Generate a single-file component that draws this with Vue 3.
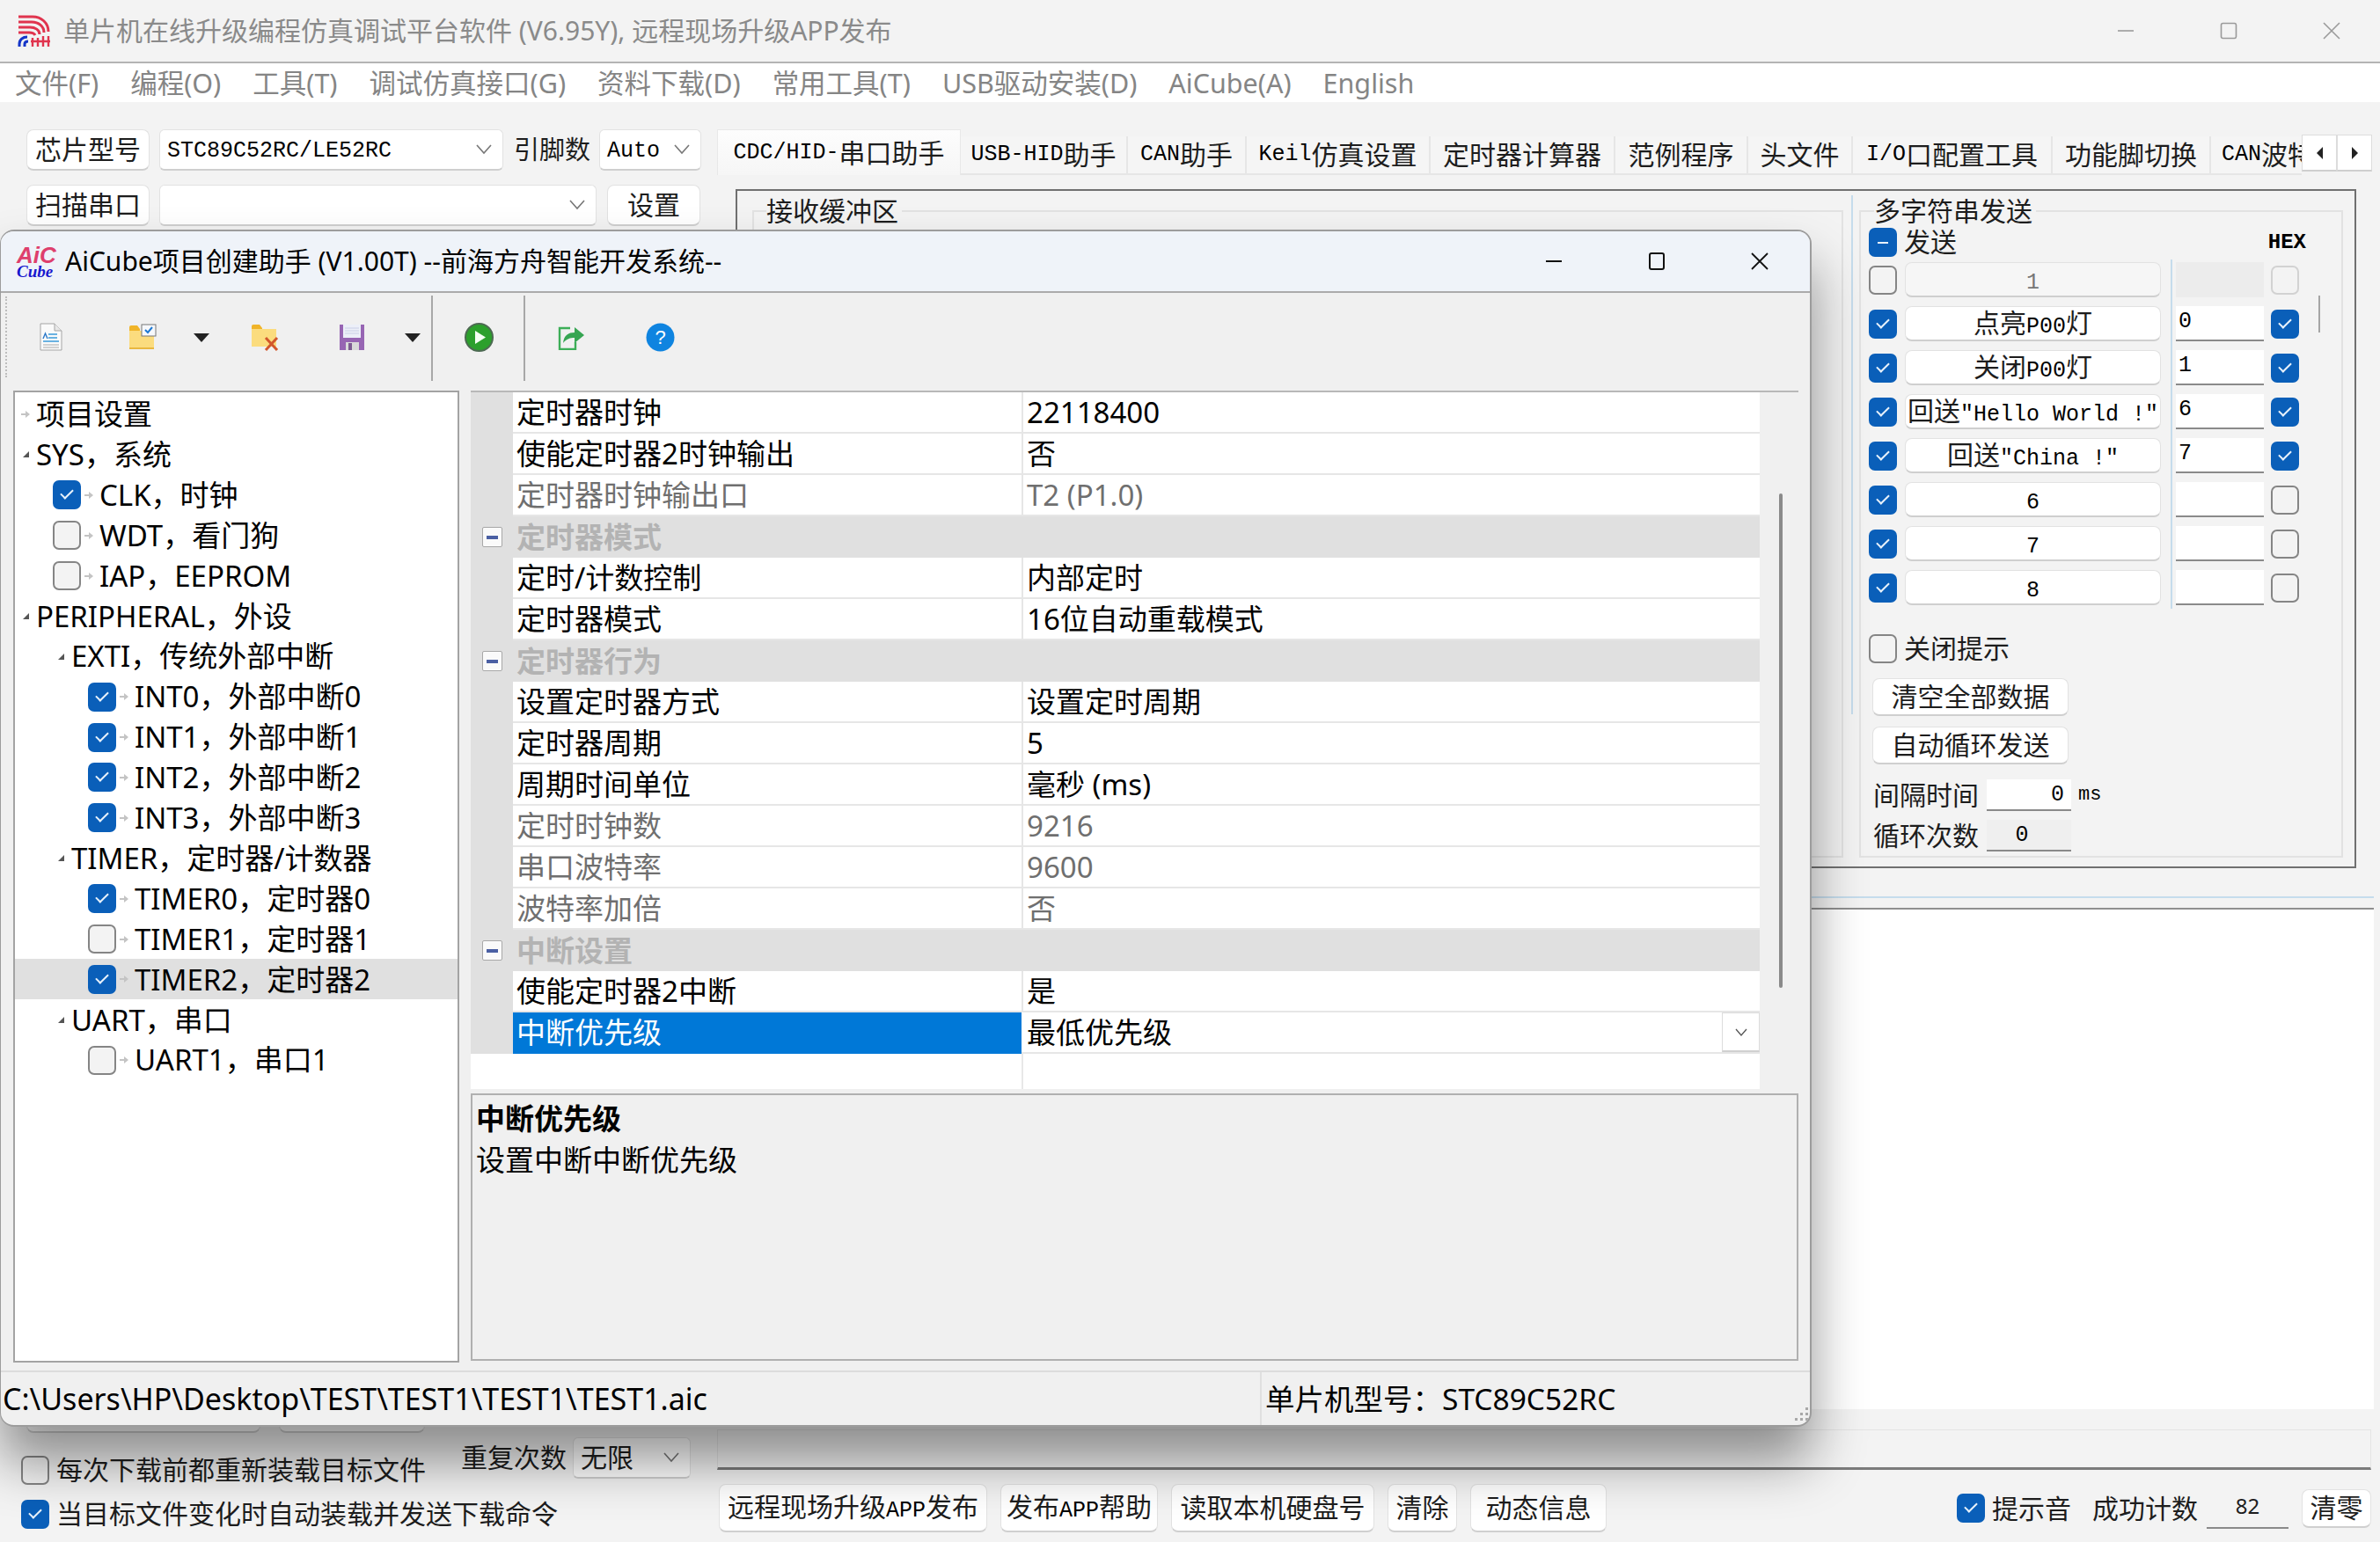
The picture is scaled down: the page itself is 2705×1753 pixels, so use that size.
<script setup>
const menus = ['文件(F)', '编程(O)', '工具(T)', '调试仿真接口(G)', '资料下载(D)', '常用工具(T)', 'USB驱动安装(D)', 'AiCube(A)', 'English'];

const tabs = [
  { label: 'USB-HID助手', width: 190 },
  { label: 'CAN助手', width: 135 },
  { label: 'Keil仿真设置', width: 209 },
  { label: '定时器计算器', width: 210 },
  { label: '范例程序', width: 151 },
  { label: '头文件', width: 119 },
  { label: 'I/O口配置工具', width: 227 },
  { label: '功能脚切换', width: 180 },
  { label: 'CAN波特率', width: 103, clipped: true },
];

const sendRows = [
  { label: '1', value: '', on: false, hex: false, disabled: true },
  { label: '点亮P00灯', value: '0', on: true, hex: true },
  { label: '关闭P00灯', value: '1', on: true, hex: true },
  { label: '回送"Hello World !"', value: '6', on: true, hex: true },
  { label: '回送"China !"', value: '7', on: true, hex: true },
  { label: '6', value: '', on: true, hex: false },
  { label: '7', value: '', on: true, hex: false },
  { label: '8', value: '', on: true, hex: false },
];

const bottomButtons = [
  { label: '远程现场升级APP发布', width: 305 },
  { label: '发布APP帮助', width: 179 },
  { label: '读取本机硬盘号', width: 231 },
  { label: '清除', width: 79 },
  { label: '动态信息', width: 155 },
];

const tree = [
  { label: '项目设置', level: 0, leaf: true },
  { label: 'SYS，系统', level: 0 },
  { label: 'CLK，时钟', level: 1, leaf: true, check: true },
  { label: 'WDT，看门狗', level: 1, leaf: true, check: false },
  { label: 'IAP，EEPROM', level: 1, leaf: true, check: false },
  { label: 'PERIPHERAL，外设', level: 0 },
  { label: 'EXTI，传统外部中断', level: 1 },
  { label: 'INT0，外部中断0', level: 2, leaf: true, check: true },
  { label: 'INT1，外部中断1', level: 2, leaf: true, check: true },
  { label: 'INT2，外部中断2', level: 2, leaf: true, check: true },
  { label: 'INT3，外部中断3', level: 2, leaf: true, check: true },
  { label: 'TIMER，定时器/计数器', level: 1 },
  { label: 'TIMER0，定时器0', level: 2, leaf: true, check: true },
  { label: 'TIMER1，定时器1', level: 2, leaf: true, check: false },
  { label: 'TIMER2，定时器2', level: 2, leaf: true, check: true, selected: true },
  { label: 'UART，串口', level: 1 },
  { label: 'UART1，串口1', level: 2, leaf: true, check: false },
];

const props = [
  { name: '定时器时钟', value: '22118400' },
  { name: '使能定时器2时钟输出', value: '否' },
  { name: '定时器时钟输出口', value: 'T2 (P1.0)', dim: true },
  { category: '定时器模式' },
  { name: '定时/计数控制', value: '内部定时' },
  { name: '定时器模式', value: '16位自动重载模式' },
  { category: '定时器行为' },
  { name: '设置定时器方式', value: '设置定时周期' },
  { name: '定时器周期', value: '5' },
  { name: '周期时间单位', value: '毫秒 (ms)' },
  { name: '定时时钟数', value: '9216', dim: true },
  { name: '串口波特率', value: '9600', dim: true },
  { name: '波特率加倍', value: '否', dim: true },
  { category: '中断设置' },
  { name: '使能定时器2中断', value: '是' },
  { name: '中断优先级', value: '最低优先级', selected: true },
];

/** Odd indexes are the ASCII runs, drawn in the narrow bitmap-like mono face. */
function segs(text) {
  return text.split(/([\x00-\x7f]+)/);
}
</script>

<template>
  <div class="desktop">
    <div class="mainWindow">
      <header class="titleBar">
        <svg class="appLogo" width="38" height="37" viewBox="0 0 38 37" fill="none">
          <g stroke="#e0344e" stroke-width="3">
            <path d="M1 2h16c10 0 18 7 18 17" />
            <path d="M1 8h15c8 0 14 5 14 12" />
            <path d="M1 14h13c6 0 11 3 11 8" />
            <path d="M1 20h12c3 0 6 1 7 3" />
          </g>
          <path d="M2 36v-3c0-5 4-8 9-8" stroke="#1436c8" stroke-width="3" />
          <path d="M8 36v-3c0-2 2-3 4-3" stroke="#1436c8" stroke-width="3" />
          <path d="M17 26v10M23 26v10M29 24v12M35 24v12M15 30h22" stroke="#e0344e" stroke-width="2.4" />
        </svg>
        <span class="titleText">单片机在线升级编程仿真调试平台软件 (V6.95Y), 远程现场升级APP发布</span>
        <div class="winControls mainControls">
          <svg width="20" height="20" viewBox="0 0 20 20"><path d="M1 10h18" stroke="#9a9a9a" stroke-width="1.6" /></svg>
          <svg width="20" height="20" viewBox="0 0 20 20" fill="none"><rect x="1.5" y="1.5" width="17" height="17" rx="2" stroke="#9a9a9a" stroke-width="1.6" /></svg>
          <svg width="20" height="20" viewBox="0 0 20 20"><path d="M1 1l18 18M19 1L1 19" stroke="#9a9a9a" stroke-width="1.6" /></svg>
        </div>
      </header>

      <nav class="menuBar">
        <span v-for="menu in menus" :key="menu">{{ menu }}</span>
      </nav>

      <div class="mainBody">
        <aside class="leftPane">
          <div class="toolRow">
            <button class="btn chipBtn">芯片型号</button>
            <div class="select chipSelect">
              <span class="mono">STC89C52RC/LE52RC</span>
              <svg class="chev" width="18" height="12" viewBox="0 0 18 12" fill="none"><path d="M1 1l8 9 8-9" stroke="#777" stroke-width="1.6" /></svg>
            </div>
            <span class="pinLabel">引脚数</span>
            <div class="select autoSelect">
              <span class="mono">Auto</span>
              <svg class="chev" width="18" height="12" viewBox="0 0 18 12" fill="none"><path d="M1 1l8 9 8-9" stroke="#777" stroke-width="1.6" /></svg>
            </div>
          </div>
          <div class="toolRow">
            <button class="btn chipBtn">扫描串口</button>
            <div class="select portSelect">
              <svg class="chev" width="18" height="12" viewBox="0 0 18 12" fill="none"><path d="M1 1l8 9 8-9" stroke="#777" stroke-width="1.6" /></svg>
            </div>
            <button class="btn setBtn">设置</button>
          </div>

          <div class="leftBottom">
            <div class="stubRow">
              <button class="btn stubA"></button>
              <button class="btn stubB"></button>
            </div>
            <div class="reloadRow">
              <label class="checkLine reloadCheck">
                <span class="cb"></span>
                <span>每次下载前都重新装载目标文件</span>
              </label>
              <span class="repeatLabel">重复次数</span>
              <div class="select repeatSelect">
                <span>无限</span>
                <svg class="chev" width="18" height="12" viewBox="0 0 18 12" fill="none"><path d="M1 1l8 9 8-9" stroke="#777" stroke-width="1.6" /></svg>
              </div>
            </div>
            <label class="checkLine">
              <span class="cb on"></span>
              <span>当目标文件变化时自动装载并发送下载命令</span>
            </label>
          </div>
        </aside>

        <section class="rightPane">
          <div class="tabStrip">
            <div class="tab tabActive">
              <span v-for="(s, i) in segs('CDC/HID-串口助手')" :key="i" :class="{ mono: i % 2 }">{{ s }}</span>
            </div>
            <div
              v-for="tab in tabs"
              :key="tab.label"
              class="tab"
              :class="{ tabClipped: tab.clipped }"
              :style="{ width: tab.width + 'px' }"
            >
              <span v-for="(s, i) in segs(tab.label)" :key="i" :class="{ mono: i % 2 }">{{ s }}</span>
            </div>
            <div class="tabArrows">
              <span class="tabArrow"><i class="triLeft"></i></span>
              <span class="tabArrow"><i class="triRight"></i></span>
            </div>
          </div>

          <div class="tabFrame">
            <fieldset class="group recvGroup">
              <legend>接收缓冲区</legend>
            </fieldset>
            <div class="splitter"></div>
            <fieldset class="group sendGroup">
              <legend>多字符串发送</legend>
              <div class="sendHead">
                <span class="cb mixed"></span>
                <span class="sendHeadText">发送</span>
                <span class="mono hexLabel">HEX</span>
              </div>
              <div class="sendGrid">
                <template v-for="row in sendRows" :key="row.label">
                  <span class="cb" :class="{ on: row.on }"></span>
                  <button class="btn sendBtn" :class="{ disabledBtn: row.disabled }">
                    <span v-for="(s, i) in segs(row.label)" :key="i" :class="{ mono: i % 2 || /^\d$/.test(s) }">{{ s }}</span>
                  </button>
                  <div class="input mono" :class="{ disabledInput: row.disabled }">{{ row.value }}</div>
                  <span class="cb" :class="{ on: row.hex, cbFaint: row.disabled }"></span>
                </template>
              </div>
              <label class="checkLine closeTip">
                <span class="cb"></span>
                <span>关闭提示</span>
              </label>
              <button class="btn wideBtn clearBtn">清空全部数据</button>
              <button class="btn wideBtn loopBtn">自动循环发送</button>
              <div class="fieldRow intervalRow">
                <span>间隔时间</span>
                <div class="input mono intervalInput">0</div>
                <span class="mono msLabel">ms</span>
              </div>
              <div class="fieldRow countRow">
                <span>循环次数</span>
                <div class="input mono countInput">0</div>
              </div>
            </fieldset>
          </div>

          <div class="blueRule"></div>
          <div class="recvArea"></div>
          <div class="sendInput"></div>

          <div class="actionRow">
            <button
              v-for="item in bottomButtons"
              :key="item.label"
              class="btn actionBtn"
              :style="{ width: item.width + 'px' }"
            >
              <span v-for="(s, i) in segs(item.label)" :key="i" :class="{ mono: i % 2 }">{{ s }}</span>
            </button>
            <label class="checkLine soundCheck">
              <span class="cb on"></span>
              <span>提示音</span>
            </label>
            <span class="countLabel">成功计数</span>
            <div class="input countValue">82</div>
            <button class="btn zeroBtn">清零</button>
          </div>
        </section>
      </div>
    </div>

    <div class="dialog">
      <header class="dialogTitle">
        <div class="aicLogo">
          <span class="aicTop">AiC</span>
          <span class="aicBottom">Cube</span>
        </div>
        <span class="dialogTitleText">AiCube项目创建助手 (V1.00T) --前海方舟智能开发系统--</span>
        <div class="winControls dialogControls">
          <svg width="20" height="22" viewBox="0 0 20 22"><path d="M1 11h18" stroke="#111" stroke-width="2" /></svg>
          <svg width="20" height="22" viewBox="0 0 20 22" fill="none"><rect x="2" y="2" width="16" height="18" rx="2" stroke="#111" stroke-width="2" /></svg>
          <svg width="20" height="22" viewBox="0 0 20 22"><path d="M1 2l18 18M19 2L1 20" stroke="#111" stroke-width="1.8" /></svg>
        </div>
      </header>

      <div class="toolbar">
        <div class="toolBtn docBtn">
          <svg width="26" height="32" viewBox="0 0 26 32" fill="none">
            <path d="M1 1h16l8 8v22H1z" fill="#fafafa" stroke="#a5a5a5" />
            <path d="M17 1v8h8" fill="#e8e8e8" stroke="#a5a5a5" />
            <path d="M10 13h10M10 17h10M4 21h18" stroke="#3a9ad9" stroke-width="1.4" />
            <path d="M4 25h18M4 28h18" stroke="#c4c4c4" stroke-width="1.4" />
            <path d="M4 18l2.5-6 2.5 6" stroke="#2a78c8" stroke-width="1.4" />
          </svg>
        </div>
        <div class="toolBtn openBtn">
          <svg width="32" height="30" viewBox="0 0 32 30" fill="none">
            <path d="M1 4a2 2 0 0 1 2-2h7l3 4v6H1z" fill="#f0b429" />
            <path d="M1 8h28v20H1z" fill="#fbdc7e" />
            <path d="M1 27h28v2H1z" fill="#e9b840" />
            <rect x="15" y="1" width="16" height="13" fill="#f6f8fb" stroke="#777" />
            <path d="M19 7l3 3 5-6" stroke="#1d78d2" stroke-width="2" />
          </svg>
        </div>
        <i class="dropTri openDrop"></i>
        <div class="toolBtn closeBtn">
          <svg width="32" height="32" viewBox="0 0 32 32" fill="none">
            <path d="M1 4a2 2 0 0 1 2-2h7l3 4v6H1z" fill="#f0b429" />
            <path d="M1 7h28v20H1z" fill="#fbdc7e" />
            <path d="M17 17l13 14M30 17L17 31" stroke="#d2572c" stroke-width="3" />
          </svg>
        </div>
        <div class="toolBtn saveBtn">
          <svg width="30" height="31" viewBox="0 0 30 31">
            <path d="M1 1h28v29H1z" fill="#9765b3" />
            <path d="M5 1h20v15H5z" fill="#eceff8" />
            <path d="M7 5h16M7 8h16M7 11h16" stroke="#c9cfe6" stroke-width="1.2" />
            <path d="M8 21h15v9H8z" fill="#d9d9d9" />
            <path d="M11 22h4v8h-4z" fill="#7d5b92" />
          </svg>
        </div>
        <i class="dropTri saveDrop"></i>
        <span class="toolSep sepA"></span>
        <div class="toolBtn runBtn">
          <svg width="33" height="33" viewBox="0 0 33 33">
            <circle cx="16.5" cy="16.5" r="15.5" fill="#2ca02c" stroke="#4d6a52" stroke-width="2" />
            <path d="M12 9l12 7.5L12 24z" fill="#f4fff2" />
          </svg>
        </div>
        <span class="toolSep sepB"></span>
        <div class="toolBtn shareBtn">
          <svg width="32" height="30" viewBox="0 0 32 30" fill="none">
            <path d="M14 5H2v24h18v-8" stroke="#3cae57" stroke-width="2.4" />
            <path d="M6 22c1-9 6-12 13-12V4l11 9-11 9v-6c-5 0-9 1-13 6z" fill="#36a552" />
          </svg>
        </div>
        <div class="toolBtn helpBtn">
          <svg width="33" height="33" viewBox="0 0 33 33">
            <circle cx="16.5" cy="16.5" r="16" fill="#0f84e0" />
            <text x="16.5" y="24" text-anchor="middle" fill="#fff" font-size="22" font-family="Liberation Sans, sans-serif">?</text>
          </svg>
        </div>
      </div>

      <div class="dialogBody">
        <div class="treePanel">
          <div
            v-for="node in tree"
            :key="node.label"
            class="treeRow"
            :class="['level' + node.level, { treeSelected: node.selected, hasCheck: node.check !== undefined }]"
          >
            <span v-if="node.check !== undefined" class="cb treeCheck" :class="{ on: node.check }"></span>
            <svg v-if="node.leaf" class="treeArrow" width="10" height="10" viewBox="0 0 10 10"><path d="M0 4h5V1l5 4-5 4V6H0z" fill="#c4c4c4" /></svg>
            <i v-else class="treeOpen"></i>
            <span>{{ node.label }}</span>
          </div>
        </div>

        <div class="propColumn">
          <div class="propArea">
            <div class="propGrid">
              <template v-for="row in props" :key="row.name || row.category">
                <div v-if="row.category" class="propCategory">
                  <span class="minusBox"><i></i></span>
                  <span>{{ row.category }}</span>
                </div>
                <div v-else class="propRow" :class="{ propDim: row.dim, propSelected: row.selected }">
                  <span class="propName">{{ row.name }}</span>
                  <span class="propValue">{{ row.value }}</span>
                  <span v-if="row.selected" class="propDrop">
                    <svg width="14" height="9" viewBox="0 0 14 9" fill="none"><path d="M1 1l6 7 6-7" stroke="#555" stroke-width="1.3" /></svg>
                  </span>
                </div>
              </template>
              <div class="propBlank"></div>
            </div>
            <div class="propScroll"><span class="propThumb"></span></div>
          </div>
          <div class="propHelp">
            <strong>中断优先级</strong>
            <span>设置中断中断优先级</span>
          </div>
        </div>
      </div>

      <footer class="statusBar">
        <span class="statusPath">C:\Users\HP\Desktop\TEST\TEST1\TEST1\TEST1.aic</span>
        <span class="statusChip">单片机型号：STC89C52RC</span>
        <svg class="gripper" width="20" height="20" viewBox="0 0 20 20" fill="#a8a8a8">
          <path d="M15 1h3v3h-3zM15 7h3v3h-3zM9 7h3v3H9zM15 13h3v3h-3zM9 13h3v3H9zM3 13h3v3H3z" />
        </svg>
      </footer>
    </div>
  </div>
</template>

<style>
html,
body {
  margin: 0;
  background: #f3f3f3;
}
</style>

<style scoped>
.desktop {
  background: #f3f3f3;
  color: #1d1d1d;
  font-family: "Noto Sans", "Noto Sans CJK SC", sans-serif;
  font-size: 30px;
  height: 1753px;
  line-height: 1.2;
  overflow: hidden;
  position: relative;
  width: 2705px;
}

.mainWindow {
  display: flex;
  flex-direction: column;
  height: 100%;
}

.titleBar {
  align-items: center;
  border-bottom: 2px solid #b4b4b4;
  box-sizing: border-box;
  color: #8a8a8a;
  display: flex;
  flex: none;
  height: 72px;
  padding-left: 20px;
}

.appLogo {
  flex: none;
  margin-right: 14px;
}

.winControls {
  align-items: center;
  display: flex;
  margin-left: auto;
}

.mainControls {
  gap: 97px;
  padding-right: 45px;
}

.menuBar {
  align-items: center;
  background: #fff;
  color: #858585;
  display: flex;
  flex: none;
  font-size: 30.5px;
  gap: 36px;
  height: 44px;
  padding-left: 17px;
}

.mainBody {
  display: flex;
  flex: 1;
}

.mono {
  color: #000;
  font-family: "Liberation Mono", "Noto Sans CJK SC", monospace;
  font-size: 25px;
  font-weight: 400;
}

.btn {
  background: #fff;
  border: 1px solid #e2e2e2;
  border-bottom: 2px solid #cfcfcf;
  border-radius: 8px;
  box-sizing: border-box;
  color: inherit;
  font: inherit;
  padding: 0;
  white-space: nowrap;
}

.select {
  align-items: center;
  background: #fff;
  border: 1px solid #e2e2e2;
  border-bottom: 2px solid #cfcfcf;
  border-radius: 6px;
  box-sizing: border-box;
  display: flex;
  height: 47px;
  justify-content: space-between;
  padding: 0 12px 0 8px;
}

.select .mono {
  margin-top: 3px;
}

.chev {
  flex: none;
}

.input {
  background: #fff;
  border-bottom: 2px solid #8a8a8a;
  box-sizing: border-box;
  line-height: 36px;
}

.cb {
  background: #f3f3f3;
  border: 2px solid #858585;
  border-radius: 7px;
  box-sizing: border-box;
  display: inline-block;
  flex: none;
  height: 33px;
  position: relative;
  width: 32px;
}

.cb.on,
.cb.mixed {
  background: #0a5fb9;
  border-color: #0a5fb9;
}

.cb.on::after {
  border-bottom: 2px solid #e8f2fb;
  border-left: 2px solid #e8f2fb;
  content: "";
  height: 6px;
  left: 7px;
  position: absolute;
  top: 8px;
  transform: rotate(-45deg);
  width: 12px;
}

.cb.mixed::after {
  background: #e8f2fb;
  content: "";
  height: 2px;
  left: 8px;
  position: absolute;
  top: 14px;
  width: 12px;
}

.cbFaint {
  border-color: #d2d2d2;
}

.checkLine {
  align-items: center;
  display: flex;
  gap: 8px;
}

/* left column of the main window */
.leftPane {
  box-sizing: border-box;
  display: flex;
  flex: none;
  flex-direction: column;
  gap: 16px;
  padding: 31px 0 14px 24px;
  width: 810px;
}

.toolRow {
  align-items: center;
  display: flex;
  margin-left: 6px;
}

.chipBtn {
  height: 47px;
  margin-right: 11px;
  width: 140px;
}

.chipSelect {
  width: 391px;
}

.pinLabel {
  font-size: 29px;
  margin: 0 10px 0 12px;
}

.autoSelect {
  width: 116px;
}

.portSelect {
  justify-content: flex-end;
  margin-right: 12px;
  width: 497px;
}

.setBtn {
  height: 47px;
  width: 106px;
}

.leftBottom {
  display: flex;
  flex-direction: column;
  margin-top: auto;
}

.stubRow {
  display: flex;
  gap: 21px;
  height: 40px;
  margin: 0 0 5px 6px;
}

.stubA {
  width: 266px;
}

.stubB {
  width: 166px;
}

.reloadRow {
  align-items: flex-start;
  display: flex;
  height: 55px;
  margin-bottom: 14px;
}

.reloadCheck {
  margin-right: 40px;
  margin-top: 19px;
}

.repeatLabel {
  margin-right: 7px;
  margin-top: 5px;
}

.repeatSelect {
  width: 134px;
}

/* right column of the main window */
.rightPane {
  display: flex;
  flex: 1;
  flex-direction: column;
  min-width: 0;
  padding-top: 31px;
}

.tabStrip {
  align-items: flex-end;
  display: flex;
  flex: none;
  height: 52px;
  margin-left: 5px;
  width: 1880px;
}

.tab {
  align-items: center;
  background: #f5f5f5;
  border-bottom: 2px solid #e6e6e6;
  border-right: 2px solid #e6e6e6;
  box-sizing: border-box;
  display: flex;
  flex: none;
  height: 44px;
  justify-content: center;
  overflow: hidden;
  white-space: nowrap;
}

.tabClipped {
  border-right: none;
  justify-content: flex-start;
  padding-left: 12px;
}

.tabActive {
  background: linear-gradient(#fdfdfd, #f6f6f6);
  border: 1px solid #e8e8e8;
  border-bottom: none;
  height: 52px;
  width: 277px;
}

.tabArrows {
  display: flex;
  flex: none;
  margin-bottom: 4px;
}

.tabArrow {
  align-items: center;
  background: #fff;
  border: 1px solid #dcdcdc;
  border-bottom: 2px solid #cfcfcf;
  box-sizing: border-box;
  display: flex;
  height: 42px;
  justify-content: center;
  width: 40px;
}

.triLeft {
  border-bottom: 7px solid transparent;
  border-right: 7px solid #222;
  border-top: 7px solid transparent;
}

.triRight {
  border-bottom: 7px solid transparent;
  border-left: 7px solid #222;
  border-top: 7px solid transparent;
}

.tabFrame {
  border: 2px solid #707070;
  box-sizing: border-box;
  display: flex;
  flex: none;
  height: 772px;
  margin: 16px 0 0 26px;
  width: 1842px;
}

.group {
  border: 2px solid #e2e2e2;
  box-sizing: border-box;
  margin: 8px 0 10px;
  min-width: 0;
  padding: 0;
}

.group legend {
  line-height: 30px;
  margin-left: 14px;
  padding: 0 4px 0 0;
}

.recvGroup {
  margin-left: 17px;
  width: 1240px;
}

.sendGroup legend {
  margin-left: 6px;
}

.splitter {
  background: #c5dcec;
  flex: none;
  margin: 5px 7px 173px 9px;
  width: 2px;
}

.sendGroup {
  padding: 3px 0 0 9px;
  position: relative;
  width: 550px;
}

.sendHead {
  align-items: center;
  display: flex;
  height: 34px;
  margin-bottom: 6px;
}

.sendHeadText {
  margin-left: 8px;
}

.hexLabel {
  font-size: 24px;
  font-weight: 700;
  margin-left: auto;
  margin-right: 40px;
  margin-top: 3px;
}

.sendGrid {
  align-items: center;
  display: grid;
  gap: 10px 0;
  grid-auto-rows: 40px;
  grid-template-columns: 41px 308px 108px 32px;
  position: relative;
}

.sendGrid::before {
  background: #c5dcec;
  bottom: -4px;
  content: "";
  left: 343px;
  position: absolute;
  top: -3px;
  width: 2px;
}

.sendGrid::after {
  background: #a5a5a5;
  content: "";
  height: 42px;
  left: 511px;
  position: absolute;
  top: 38px;
  width: 2px;
}

.sendBtn {
  height: 40px;
  width: 291px;
}

.disabledBtn {
  background: #f6f6f6;
}

.disabledBtn .mono {
  color: #777;
}

.sendGrid .input {
  height: 40px;
  padding-left: 3px;
  width: 100px;
}

.sendGrid .disabledInput {
  background: #ececec;
  border-bottom-color: #ececec;
}

.closeTip {
  margin-top: 31px;
}

.wideBtn {
  display: block;
  height: 43px;
  margin-left: 4px;
  width: 223px;
}

.clearBtn {
  margin-top: 16px;
}

.loopBtn {
  margin-top: 12px;
}

.fieldRow {
  align-items: center;
  display: flex;
  margin-left: 5px;
}

.fieldRow > span:first-child {
  margin-right: 9px;
}

.intervalRow {
  margin-top: 17px;
}

.countRow {
  margin-top: 10px;
}

.intervalInput {
  height: 36px;
  padding-right: 8px;
  text-align: right;
  width: 96px;
}

.countInput {
  background: #efefef;
  height: 36px;
  padding-right: 16px;
  text-align: center;
  width: 96px;
}

.msLabel {
  font-size: 22px;
  margin-left: 8px;
}

.blueRule {
  background: #c5dcec;
  flex: none;
  height: 2px;
  margin-top: 32px;
  width: 1888px;
}

.recvArea {
  background: #fff;
  border-top: 2px solid #8f8f8f;
  box-sizing: border-box;
  flex: none;
  height: 570px;
  margin-top: 11px;
  width: 1888px;
}

.sendInput {
  background: #f3f3f3;
  border: 1px solid #e4e4e4;
  border-bottom: 3px solid #7b7b7b;
  box-sizing: border-box;
  flex: none;
  height: 46px;
  margin: 23px 0 0 5px;
  width: 1880px;
}

.actionRow {
  align-items: center;
  display: flex;
  gap: 15px;
  height: 55px;
  margin: 16px 0 0 7px;
  width: 1878px;
}

.actionBtn {
  height: 55px;
}

.soundCheck {
  margin-left: auto;
}

.countLabel {
  margin-left: 9px;
}

.countValue {
  background: #f3f3f3;
  font-size: 24px;
  height: 46px;
  line-height: 40px;
  margin-left: -5px;
  text-align: center;
  width: 93px;
}

.zeroBtn {
  height: 44px;
  width: 79px;
}

/* floating project dialog */
.dialog {
  background: #f0f0f0;
  border: 2px solid #9c9c9c;
  border-left-width: 1px;
  border-radius: 16px;
  box-shadow: 0 40px 60px rgba(0, 0, 0, 0.42);
  box-sizing: border-box;
  color: #000;
  display: flex;
  flex-direction: column;
  font-size: 33px;
  height: 1361px;
  left: 0;
  overflow: hidden;
  position: absolute;
  top: 261px;
  width: 2059px;
}

.dialogTitle {
  align-items: center;
  background: #eff3f9;
  border-bottom: 2px solid #ababab;
  box-sizing: border-box;
  display: flex;
  flex: none;
  font-size: 30px;
  height: 70px;
  padding-left: 18px;
}

.aicLogo {
  display: flex;
  flex-direction: column;
  font-family: "Liberation Serif", serif;
  font-style: italic;
  font-weight: 700;
  line-height: 1;
  margin-right: 13px;
  width: 42px;
}

.aicTop {
  color: #de3f6d;
  font-family: "Liberation Sans", sans-serif;
  font-size: 26px;
  height: 22px;
}

.aicBottom {
  color: #1717cf;
  font-size: 19px;
}

.dialogControls {
  gap: 97px;
  padding-right: 47px;
}

.toolbar {
  align-items: center;
  display: flex;
  flex: none;
  height: 100px;
  position: relative;
}

.toolbar::before {
  border-left: 2px dotted #bdbdbd;
  bottom: 4px;
  content: "";
  left: 5px;
  position: absolute;
  top: 4px;
}

.toolBtn {
  display: flex;
  flex: none;
}

.docBtn {
  margin-left: 44px;
}

.openBtn {
  margin-left: 75px;
}

.dropTri {
  border-left: 9px solid transparent;
  border-right: 9px solid transparent;
  border-top: 10px solid #222;
  flex: none;
  margin-top: 2px;
}

.openDrop {
  margin-left: 42px;
}

.closeBtn {
  margin-left: 47px;
}

.saveBtn {
  margin-left: 68px;
}

.saveDrop {
  margin-left: 45px;
}

.toolSep {
  align-self: stretch;
  background: #a8a8a8;
  flex: none;
  margin: 3px 0 0;
  width: 2px;
}

.sepA {
  margin-left: 12px;
}

.runBtn {
  margin-left: 36px;
}

.sepB {
  margin-left: 34px;
}

.shareBtn {
  margin-left: 37px;
}

.helpBtn {
  margin-left: 68px;
}

.dialogBody {
  display: flex;
  flex: 1;
  gap: 13px;
  min-height: 0;
  padding: 11px 13px 0 14px;
}

.treePanel {
  background: #fff;
  border: 2px solid #a3a3a3;
  box-sizing: border-box;
  flex: none;
  padding-top: 2px;
  width: 507px;
}

.treeRow {
  align-items: center;
  display: flex;
  height: 45.9px;
  white-space: nowrap;
}

.treeSelected {
  background: #e0e0e0;
}

.level0 {
  padding-left: 7px;
}

.level1 {
  padding-left: 47px;
}

.level1.hasCheck {
  padding-left: 43px;
}

.level2 {
  padding-left: 83px;
}

.treeCheck {
  margin-right: 4px;
}

.treeArrow {
  flex: none;
  margin-right: 7px;
}

.treeOpen {
  border-bottom: 7px solid #555;
  border-left: 7px solid transparent;
  flex: none;
  margin-left: 2px;
  margin-right: 8px;
}

.propColumn {
  display: flex;
  flex: 1;
  flex-direction: column;
  gap: 5px;
  min-width: 0;
}

.propArea {
  border-top: 2px solid #b8b8b8;
  box-sizing: border-box;
  display: flex;
  flex: none;
  height: 794px;
}

.propGrid {
  background: #fff;
  display: flex;
  flex-direction: column;
  width: 1465px;
}

.propRow {
  background: #fff;
  border-left: 48px solid #e0e0e0;
  box-sizing: border-box;
  display: flex;
  flex: none;
  height: 47px;
  position: relative;
  white-space: nowrap;
}

.propName,
.propValue {
  align-items: center;
  border-bottom: 2px solid #e6e6e6;
  box-sizing: border-box;
  display: flex;
  padding-left: 4px;
}

.propName {
  flex: none;
  width: 578px;
}

.propValue {
  border-left: 2px solid #e6e6e6;
  flex: 1;
}

.propDim {
  color: #6f6f6f;
}

.propSelected .propName {
  background: #0078d7;
  border-bottom-color: #0078d7;
  color: #fff;
}

.propSelected .propValue {
  border-left: none;
  padding-left: 6px;
}

.propDrop {
  align-items: center;
  background: #fff;
  border: 1px solid #dcdcdc;
  border-bottom: 2px solid #d0d0d0;
  box-sizing: border-box;
  display: flex;
  height: 45px;
  justify-content: center;
  position: absolute;
  right: 0;
  top: 0;
  width: 43px;
}

.propCategory {
  align-items: center;
  background: #e0e0e0;
  color: #b3b3b3;
  display: flex;
  flex: none;
  font-weight: 700;
  height: 47px;
}

.minusBox {
  align-items: center;
  background: #fafafa;
  border: 1px solid #a8a8a8;
  border-radius: 2px;
  box-sizing: border-box;
  display: flex;
  flex: none;
  height: 23px;
  justify-content: center;
  margin: 0 16px 0 13px;
  width: 23px;
}

.minusBox i {
  background: #4a5fa3;
  height: 4px;
  width: 13px;
}

.propBlank {
  background: linear-gradient(#e8e8e8, #e8e8e8) no-repeat 626px 0 / 2px 100%;
  flex: 1;
}

.propScroll {
  background: #f0f0f0;
  flex: 1;
  position: relative;
}

.propThumb {
  background: #8a8a8a;
  border-radius: 2px;
  height: 562px;
  left: 22px;
  position: absolute;
  top: 115px;
  width: 4px;
}

.propHelp {
  border: 2px solid #b0b0b0;
  box-sizing: border-box;
  display: flex;
  flex: 1;
  flex-direction: column;
  gap: 7px;
  margin-bottom: 2px;
  padding: 7px 4px;
}

.propHelp strong {
  font-weight: 700;
}

.statusBar {
  align-items: center;
  border-top: 2px solid #dcdcdc;
  box-sizing: border-box;
  display: flex;
  flex: none;
  height: 62px;
  margin-top: 9px;
  position: relative;
}

.statusPath {
  flex: none;
  font-size: 34px;
  padding-left: 2px;
  width: 1429px;
}

.statusChip {
  border-left: 2px solid #e0e0e0;
  font-size: 33.5px;
  height: 100%;
  line-height: 60px;
  padding-left: 4px;
}

.gripper {
  bottom: 1px;
  position: absolute;
  right: 0;
}
</style>
